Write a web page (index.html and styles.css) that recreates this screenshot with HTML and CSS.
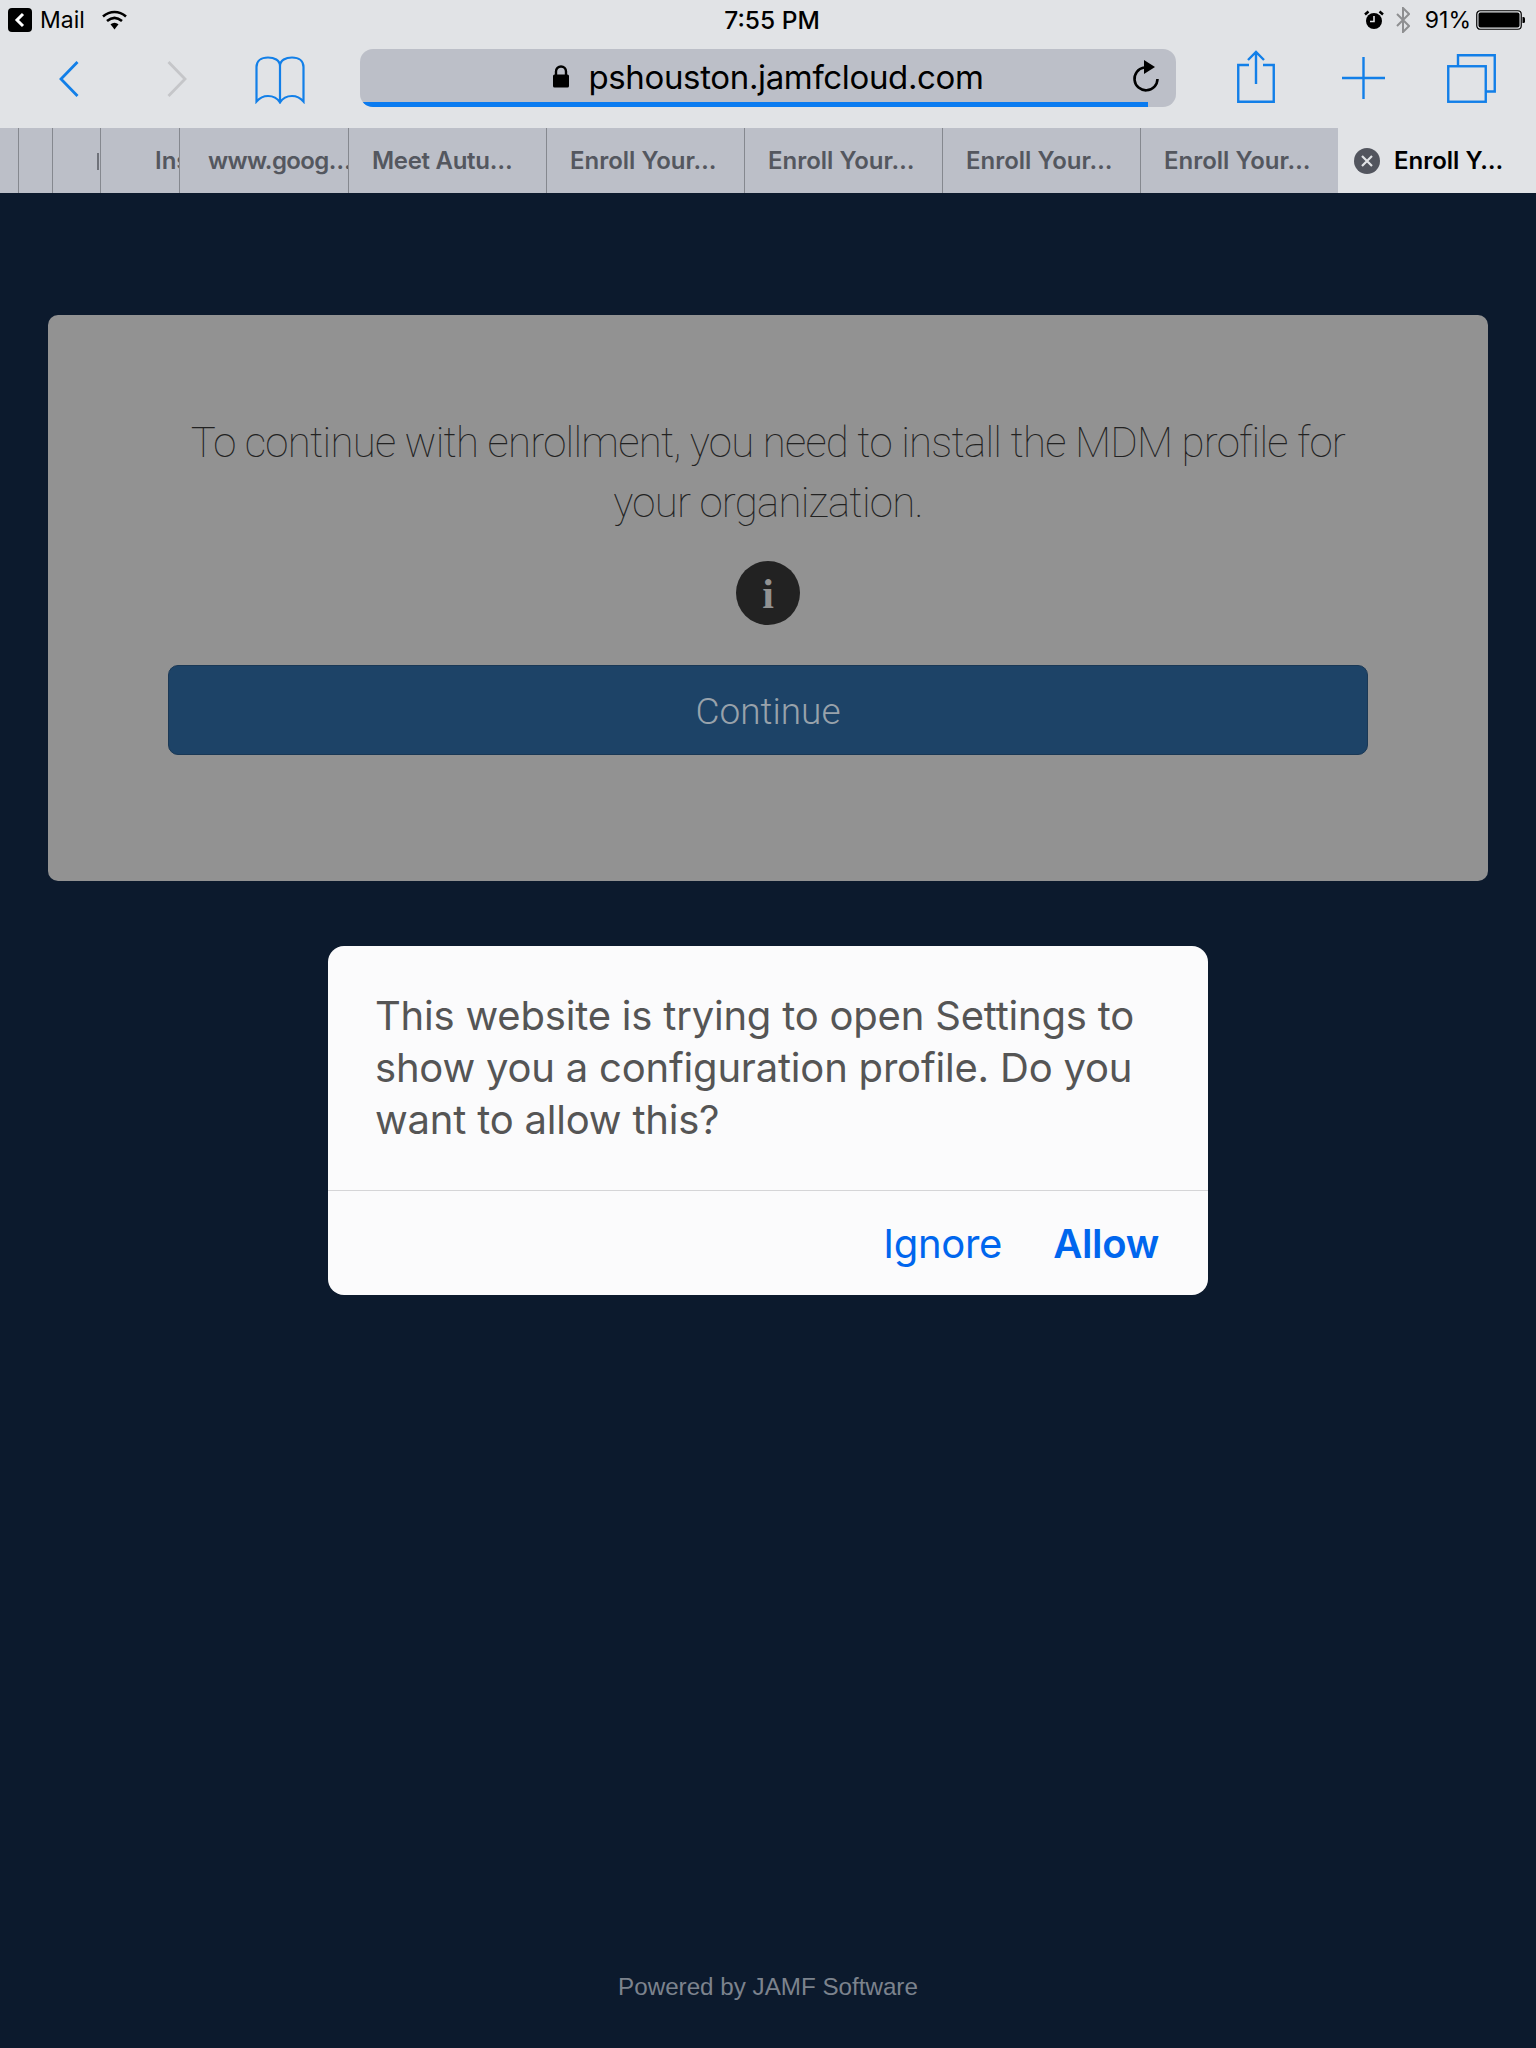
FILE: index.html
```html
<!DOCTYPE html>
<html lang="en">
<head>
<meta charset="utf-8">
<title>Enroll Your iPad</title>
<link rel="stylesheet" href="styles.css">
</head>
<body>
<div class="app">
  <header class="status">
    <div class="status-left">
      <svg class="ic-badge" viewBox="0 0 24 24"><rect width="24" height="24" rx="4" fill="#000"/><path d="M15 6l-6 6 6 6" fill="none" stroke="#fff" stroke-width="3"/></svg>
      <span class="mail">Mail</span>
      <svg class="ic-wifi" viewBox="0 0 25 20"><path d="M1 6.500C8 .5 17 .5 24 6.500" fill="none" stroke="#000" stroke-width="2.600"/><path d="M5 11C10 6.800 15 6.800 20 11" fill="none" stroke="#000" stroke-width="2.600"/><path d="M8.500 14.200c2.600-2 5.400-2 8 0l-4 5.300z" fill="#000"/></svg>
    </div>
    <div class="time">7:55 PM</div>
    <div class="status-right">
      <svg class="ic-alarm" viewBox="0 0 20 20"><circle cx="10" cy="11" r="8" fill="#000"/><path d="M1 4.500L4.500 1.500M19 4.500L15.500 1.500" stroke="#000" stroke-width="2.500"/><path d="M10 6v5.500H6" fill="none" stroke="#e1e3e6" stroke-width="1.600"/></svg>
      <svg class="ic-bt" viewBox="0 0 14 26"><path d="M1 7l12 12-6 6V1l6 6L1 19" fill="none" stroke="#8e8f91" stroke-width="2"/></svg>
      <span class="batt-text">91%</span>
      <svg class="ic-batt" viewBox="0 0 49 20"><rect x=".75" y=".75" width="44.500" height="18.500" rx="3.500" fill="none" stroke="#000" stroke-width="1.200"/><rect x="2.500" y="2.500" width="41" height="15" rx="2" fill="#000"/><path d="M46.500 7h1a1.500 1.500 0 0 1 1.500 1.500v3a1.500 1.500 0 0 1-1.500 1.500h-1z" fill="#000"/></svg>
    </div>
  </header>

  <nav class="toolbar">
    <svg class="ic ic-back" viewBox="0 0 20 36"><path d="M18.500 1L2 18l16.500 17" fill="none" stroke="#127fe8" stroke-width="2.800"/></svg>
    <svg class="ic ic-fwd" viewBox="0 0 20 36"><path d="M1.500 1L18 18 1.500 35" fill="none" stroke="#c5c6c9" stroke-width="2.800"/></svg>
    <svg class="ic ic-book" viewBox="0 0 50 48"><path d="M25 10C25 4 19 1.500 13 1.500 6 1.500 1.500 5 1.500 11v34.500C5 41.500 9 40 13 40c5 0 9.500 2.500 12 6.500C27.500 42.500 32 40 37 40c4 0 8 1.500 11.500 5.500V11C48.500 5 44 1.500 37 1.500 31 1.500 25 4 25 10zM25 10v36" fill="none" stroke="#127fe8" stroke-width="2.200"/></svg>
    <div class="url">
      <svg class="ic-lock" viewBox="0 0 18 23"><path d="M4 10V6.500a5 5 0 0 1 10 0V10" fill="none" stroke="#000" stroke-width="2.400"/><rect x="1" y="9.500" width="16" height="13" rx="1.500" fill="#000"/></svg>
      <span class="host">pshouston.jamfcloud.com</span>
      <svg class="ic-reload" viewBox="0 0 28 32"><path d="M12 7.500A11.500 11.500 0 1 0 25.500 19" fill="none" stroke="#000" stroke-width="2.600"/><path d="M12 0l11 7-11 7z" fill="#000"/></svg>
      <div class="progress"></div>
    </div>
    <svg class="ic ic-share" viewBox="0 0 38 53"><path d="M12 15H1.250v36.750h35.500V15H26" fill="none" stroke="#127fe8" stroke-width="2.400"/><path d="M19 2v32M11 10l8-8 8 8" fill="none" stroke="#127fe8" stroke-width="2.400"/></svg>
    <svg class="ic ic-plus" viewBox="0 0 43 42"><path d="M21.500 0v42M0 21h43" fill="none" stroke="#127fe8" stroke-width="2.400"/></svg>
    <svg class="ic ic-tabs" viewBox="0 0 49 49"><path d="M11 12V1.250h36.750v36.250H39" fill="none" stroke="#127fe8" stroke-width="2.400"/><rect x="1.250" y="12.250" width="37.500" height="35.500" fill="none" stroke="#127fe8" stroke-width="2.400"/></svg>
  </nav>

  <div class="tabs">
    <div class="tab"></div>
    <div class="tab"></div>
    <div class="tab tab-sliver"></div>
    <div class="tab tab-clip"><span>Ins</span></div>
    <div class="tab tab-goog"><span>www.goog…</span></div>
    <div class="tab tab-meet"><span>Meet Autu…</span></div>
    <div class="tab tab-enroll"><span>Enroll Your…</span></div>
    <div class="tab tab-enroll"><span>Enroll Your…</span></div>
    <div class="tab tab-enroll"><span>Enroll Your…</span></div>
    <div class="tab tab-enroll tab-last"><span>Enroll Your…</span></div>
    <div class="tab tab-active">
      <svg class="ic-close" viewBox="0 0 26 26"><circle cx="13" cy="13" r="13" fill="#52555e"/><path d="M8 8l10 10M18 8L8 18" stroke="#e1e3e6" stroke-width="2.200"/></svg>
      <span>Enroll Y…</span>
    </div>
  </div>

  <main class="page">
    <section class="card">
      <p class="lead">To continue with enrollment, you need to install the MDM profile for<br>your organization.</p>
      <div class="info">i</div>
      <button class="continue" type="button">Continue</button>
    </section>

    <section class="dialog">
      <p class="dialog-text">This website is trying to open Settings to show you a configuration profile. Do you want to allow this?</p>
      <div class="dialog-actions">
        <span class="act">Ignore</span>
        <span class="act act-strong">Allow</span>
      </div>
    </section>

    <footer class="foot">Powered by JAMF Software</footer>
  </main>
</div>
</body>
</html>
```
FILE: styles.css
```css
* { box-sizing: border-box; }
html, body { margin: 0; padding: 0; }
body { font-family: Inter, "Liberation Sans", sans-serif; background: #0c1a2d; }
svg { display: block; flex: none; }

.app { width: 1536px; height: 2048px; display: flex; flex-direction: column; overflow: hidden; }

.status {
  height: 40px;
  background: #e1e3e6;
  display: grid;
  grid-template-columns: 1fr auto 1fr;
  align-items: center;
  color: #000;
  font-size: 23px;
}
.status-left { display: flex; align-items: center; padding-left: 8px; }
.ic-badge { width: 24px; height: 24px; }
.mail { margin-left: 8px; font-weight: 400; }
.ic-wifi { width: 25px; height: 20px; margin-left: 17px; }
.time { font-weight: 500; font-size: 24.500px; padding-left: 8px; }
.status-right { display: flex; align-items: center; justify-content: flex-end; padding-right: 11px; }
.ic-alarm { width: 20px; height: 20px; }
.ic-bt { width: 14px; height: 26px; margin-left: 12px; }
.batt-text { margin-left: 15px; }
.ic-batt { width: 49px; height: 20px; margin-left: 5px; }

.toolbar {
  height: 88px;
  background: #e1e3e6;
  display: flex;
  align-items: center;
  padding-left: 59px;
  padding-bottom: 9px;
}
.ic-back, .ic-fwd { width: 20px; height: 36px; margin-top: -2px; }
.ic-fwd { margin-left: 88px; }
.ic-book { width: 50px; height: 48px; margin-left: 68px; margin-top: 1px; }
.url {
  position: relative;
  width: 816px;
  height: 58px;
  margin-left: 55px;
  margin-top: -3px;
  background: #bcbfc8;
  border-radius: 13px;
  overflow: hidden;
  display: flex;
  align-items: center;
  justify-content: center;
  padding-bottom: 3px;
}
.ic-lock { width: 18px; height: 23px; margin-right: 18px; }
.host { font-size: 33px; letter-spacing: -0.350px; color: #000; }
.ic-reload { position: absolute; right: 16px; top: 11px; width: 28px; height: 32px; }
.progress { position: absolute; left: 0; bottom: 0; width: 788px; height: 5px; background: #0a7bf0; }
.ic-share { width: 38px; height: 53px; margin-left: 61px; margin-top: -7px; }
.ic-plus { width: 43px; height: 42px; margin-left: 67px; margin-top: -4px; }
.ic-tabs { width: 49px; height: 49px; margin-left: 62px; margin-top: -3px; }

.tabs {
  height: 65px;
  display: grid;
  grid-template-columns: 19px 34px 48px 79px 169px 198px 198px 198px 198px 197px 198px;
  background: #bcbfc8;
  font-size: 24px;
  font-weight: 600;
  color: #54575f;
}
.tab {
  border-right: 1px solid #85888f;
  overflow: hidden;
  white-space: nowrap;
  display: flex;
  align-items: center;
  justify-content: center;
}
.tab-sliver { position: relative; }
.tab-sliver::after {
  content: "";
  position: absolute;
  right: 1px;
  top: 25px;
  width: 2px;
  height: 17px;
  background: #6f727a;
}
.tab-clip { justify-content: flex-start; padding-left: 54px; }
.tab-goog { justify-content: flex-start; padding-left: 28px; letter-spacing: -0.600px; }
.tab-meet { justify-content: flex-start; padding-left: 23px; letter-spacing: -0.300px; }
.tab-enroll { justify-content: flex-start; padding-left: 23px; }
.tab-last { border-right: 0; }
.tab-active {
  border-right: 0;
  background: #e1e3e6;
  color: #000;
  justify-content: flex-start;
  padding-left: 16px;
}
.ic-close { width: 26px; height: 26px; margin-right: 14px; }

.page { flex: 1; display: flex; flex-direction: column; padding: 122px 48px 47px; }

.card {
  height: 566px;
  background: #929292;
  border-radius: 10px;
  padding: 98px 120px 0;
  display: flex;
  flex-direction: column;
  align-items: center;
}
.lead {
  margin: 0;
  font-family: Roboto, sans-serif;
  font-size: 42px;
  font-weight: 100;
  letter-spacing: -0.750px;
  line-height: 60px;
  color: #222;
  text-align: center;
  white-space: nowrap;
}
.info {
  width: 64px;
  height: 64px;
  margin-top: 28px;
  border-radius: 50%;
  background: #222;
  color: #929292;
  font-family: "Liberation Serif", serif;
  font-weight: 700;
  font-size: 42px;
  line-height: 66px;
  text-align: center;
}
.continue {
  width: 100%;
  height: 90px;
  margin-top: 40px;
  background: #1d4367;
  border: 1px solid #1a3855;
  border-radius: 10px;
  color: #98a2ab;
  font-family: Roboto, sans-serif;
  font-size: 37px;
  font-weight: 300;
  padding: 2px 0 0;
}

.dialog {
  width: 880px;
  height: 349px;
  margin: 65px auto 0;
  background: #fbfbfc;
  border-radius: 16px;
  display: flex;
  flex-direction: column;
}
.dialog-text {
  margin: 0;
  height: 245px;
  padding: 44px 46px 0 47px;
  font-size: 40px;
  letter-spacing: -0.200px;
  line-height: 52px;
  color: #555;
  border-bottom: 1px solid #d5d5d7;
}
.dialog-actions {
  flex: 1;
  display: flex;
  justify-content: flex-end;
  align-items: center;
  gap: 51px;
  padding-right: 49px;
  color: #0066ee;
  font-size: 40px;
  letter-spacing: -0.300px;
}
.act-strong { font-weight: 600; }

.foot {
  margin-top: auto;
  text-align: center;
  font-family: "Liberation Sans", sans-serif;
  font-size: 24.200px;
  line-height: 28px;
  color: #7c838d;
}
```
